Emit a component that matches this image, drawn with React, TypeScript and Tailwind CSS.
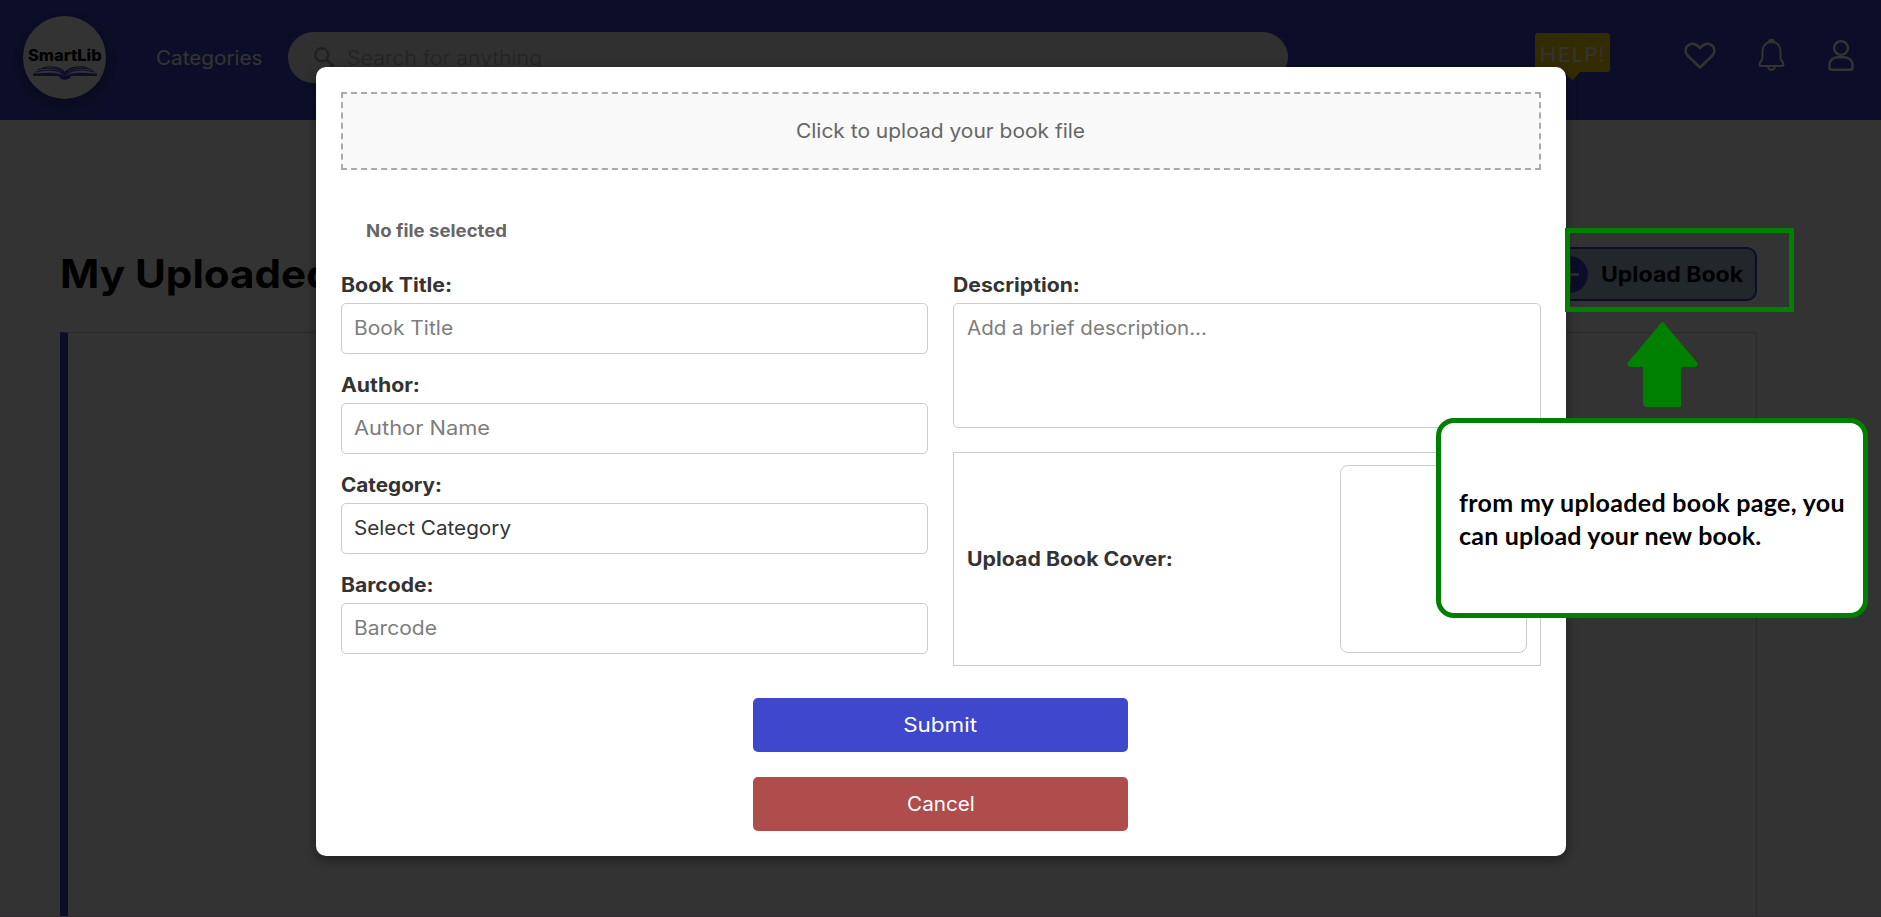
import type { ReactNode } from 'react';

function Logo() {
  return (
    <div className="flex h-[83px] w-[83px] shrink-0 flex-col items-center rounded-full bg-white pt-[31px] shadow-[0_4px_16px_4px_rgba(0,0,0,0.3)]">
      <span className="scale-x-[1.06] whitespace-nowrap text-[15.5px] leading-[18px] font-extrabold text-black">SmartLib</span>
      <svg className="mt-[1px]" width="64" height="15" viewBox="0 0 64 15" fill="none" stroke="#3f48cc" strokeLinecap="round">
        <path d="M0 7.5 L3 7.5 C12 6.5 23 6 29 8.5 Q32 10.5 35 8.5 C41 6 52 6.5 61 7.5 L64 7.5 L64 10 L38 10 C37 15 27 15 26 10 L0 10 Z" fill="#3f48cc" stroke="none" />
        <path d="M3 6 C13 3 25 3 32 9 C39 3 51 3 61 6 M5 3.5 C15 1 27 2 32 8 C37 2 49 1 59 3.5 M10 1.5 C20 -0.5 29 2 32 7 C35 2 44 -0.5 54 1.5" strokeWidth="1.1" />
      </svg>
    </div>
  );
}

function HelpSign() {
  return (
    <div className="flex w-[75px] flex-col">
      <div className="flex h-[39px] items-center justify-center rounded-[3px] bg-[#f8da00] pt-[2px] font-['Lato'] text-[22px] font-normal tracking-[1.2px] text-white">HELP!</div>
      <svg className="ml-[29px]" width="18" height="9" viewBox="0 0 18 9" fill="#f8da00">
        <path d="M0 0 H16 L10 7 Q8.500 9 7 7 Z" />
      </svg>
    </div>
  );
}

function Header() {
  return (
    <header className="flex h-[120px] items-start bg-[#3f48cc] pt-4 pl-[23px]">
      <Logo />
      <a className="mt-[27px] ml-[50px] w-[107px] whitespace-nowrap text-[19.5px] leading-[30px] text-white">
        <span className="inline-block origin-left scale-x-[1.06]">Categories</span>
      </a>
      <div className="mt-4 ml-[25px] flex h-[51px] w-[1000px] shrink-0 items-center rounded-full bg-[#eff1ef] pl-[26px]">
        <svg width="21" height="21" viewBox="0 0 21 21" fill="none" stroke="#aaa6a6" strokeWidth="2.500">
          <circle cx="7.800" cy="7.800" r="6.500" />
          <path d="M12.500 12.500 L19.500 19.500" strokeWidth="3" />
        </svg>
        <span className="ml-[12px] origin-left scale-x-[1.1] pt-px text-[19.5px] leading-[30px] font-light text-[#b2aeae]">Search for anything</span>
      </div>
      <div className="mt-[17px] ml-[247px]">
        <HelpSign />
      </div>
      <svg className="mt-[26px] ml-[74px] shrink-0" width="32" height="28" viewBox="0 0 32 28" fill="none" stroke="white" strokeWidth="2.500" strokeLinejoin="round">
        <path d="M16 25.500 L4 14 C0 9.800 1.300 4 5.500 2.300 C10 0.600 13.500 3 16 6 C18.500 3 22 0.600 26.500 2.300 C30.700 4 32 9.800 28 14 Z" />
      </svg>
      <svg className="mt-[22px] ml-[42px] shrink-0" width="27" height="34" viewBox="0 0 27 34" fill="none" stroke="white" strokeWidth="2" strokeLinejoin="round">
        <path d="M13.500 4 C7.500 4 4.500 8.500 4.500 13 V20 C4.500 23 1.500 23.500 1.500 26.500 Q1.500 28 3.500 28 H23.500 Q25.500 28 25.500 26.500 C25.500 23.500 22.500 23 22.500 20 V13 C22.500 8.500 19.500 4 13.500 4 Z" />
        <path d="M11.300 4 C11.300 1 15.700 1 15.700 4 M10 28.500 C10.500 33 16.500 33 17 28.500" />
      </svg>
      <svg className="mt-[23px] ml-[42px] shrink-0" width="28" height="33" viewBox="0 0 28 33" fill="none" stroke="white" strokeWidth="2.400" strokeLinejoin="round">
        <circle cx="14" cy="9" r="6.900" />
        <path d="M11 18.200 H17 C22.500 18.200 25.500 22 25.500 26 V28.500 Q25.500 30.800 23.500 30.800 H4.500 Q2.500 30.800 2.500 28.500 V26 C2.500 22 5.500 18.200 11 18.200 Z" />
      </svg>
    </header>
  );
}

function Page() {
  return (
    <div className="flex h-[917px] flex-col bg-white">
      <Header />
      <main className="flex flex-1 flex-col pt-[127px] pr-[124px] pl-[60px]">
        <div className="flex h-[54px] items-center justify-between">
          <h1 className="origin-left scale-x-[1.08] text-[39px] font-bold whitespace-nowrap text-black">My Uploaded</h1>
          <button className="flex h-[54px] w-[218px] items-center rounded-[10px] border-2 border-[#3f48cc] bg-[#acc2d8] pl-[10px]">
            <svg width="37" height="37" viewBox="0 0 37 37">
              <circle cx="18.500" cy="18.500" r="18.500" fill="#3f48cc" />
              <path d="M9 18.500 H28 M18.500 9 V28" stroke="#f0f0f0" strokeWidth="2.500" />
            </svg>
            <span className="ml-[13px] origin-left scale-x-[1.096] pt-[2px] text-[21px] font-bold whitespace-nowrap text-black">Upload Book</span>
          </button>
        </div>
        <section className="mt-[31px] flex-1 border-t border-r border-l-8 border-[#ccc] border-l-[#3f48cc]" />
      </main>
      <div className="h-px bg-[#f5dcea]" />
    </div>
  );
}

function Field({ label, children }: { label: ReactNode; children: ReactNode }) {
  return (
    <div className="flex flex-col">
      <div className="flex h-[32px] text-[19.5px] leading-[28px] font-bold text-[#333]">{label}</div>
      {children}
    </div>
  );
}

const box = 'flex h-[51px] items-center rounded-[5px] border border-[#ccc] pl-[12px] text-[19.5px] text-[#7d7d7d]';

function UploadModal() {
  return (
    <div className="flex h-[789px] w-[1250px] flex-col rounded-[10px] bg-white px-[25px] pt-[25px] shadow-[0_4px_12px_rgba(0,0,0,0.4)]">
      <div className="flex h-[78px] shrink-0 items-center justify-center border-2 border-dashed border-[#aaa] bg-[#f9f9f9] pt-[2px] text-[19.5px] text-[#666]">
        <span className="scale-x-[1.075]">Click to upload your book file</span>
      </div>
      <div className="mt-[47px] flex h-[28px] pl-[25px] text-[17.5px] leading-[28px] font-bold text-[#666]">
        <span className="origin-left scale-x-[1.062]">No file selected</span>
      </div>
      <div className="mt-[26px] grid grid-cols-2 gap-x-[25px]">
        <div className="flex flex-col gap-[17px]">
          <Field label={<span className="origin-left scale-x-[1.093]">Book Title:</span>}>
            <div className={box}><span className="origin-left scale-x-[1.076]">Book Title</span></div>
          </Field>
          <Field label={<span className="origin-left scale-x-[1.09]">Author:</span>}>
            <div className={box}><span className="origin-left scale-x-[1.12]">Author Name</span></div>
          </Field>
          <Field label={<span className="origin-left scale-x-[1.062]">Category:</span>}>
            <div className={box}><span className="origin-left scale-x-[1.061] text-[#333]">Select Category</span></div>
          </Field>
          <Field label={<span className="origin-left scale-x-[1.082]">Barcode:</span>}>
            <div className={box}><span className="origin-left scale-x-[1.079]">Barcode</span></div>
          </Field>
        </div>
        <div className="flex flex-col">
          <Field label={<span className="origin-left scale-x-[1.087]">Description:</span>}>
            <div className="flex h-[125px] rounded-[5px] border border-[#ccc] pt-[10px] pl-[13px] text-[19.5px] leading-[29px] text-[#7d7d7d]">
              <span className="origin-left scale-x-[1.053]">Add a brief description...</span>
            </div>
          </Field>
          <div className="mt-[24px] flex h-[214px] items-center justify-between border border-[#ccc] pr-[13px] pl-[13px]">
            <span className="origin-left scale-x-[1.093] pt-[2px] text-[19.5px] font-bold text-[#333]">Upload Book Cover:</span>
            <div className="h-[188px] w-[187px] rounded-lg border border-[#ccc]" />
          </div>
        </div>
      </div>
      <div className="mt-[32px] flex flex-col items-center gap-[25px]">
        <button className="flex h-[54px] w-[375px] items-center justify-center rounded-[5px] bg-[#3f48cc] pt-[2px] text-[19.5px] text-white">
          <span className="scale-x-[1.15]">Submit</span>
        </button>
        <button className="flex h-[54px] w-[375px] items-center justify-center rounded-[5px] bg-[#af4c4c] pt-[2px] text-[19.5px] text-white">
          <span className="scale-x-[1.06]">Cancel</span>
        </button>
      </div>
    </div>
  );
}

function Annotations() {
  return (
    <>
      <div className="absolute top-[228px] left-[1565px] h-[84px] w-[229px] border-[5px] border-[#008000]" />
      <svg className="absolute top-[321px] left-[1626px]" width="73" height="87" viewBox="0 0 73 87" fill="#008000" stroke="#008000" strokeWidth="2" strokeLinejoin="round">
        <path d="M36.500 2 L71 43 L69.500 45 H54 V85 H20 L18 83 V45 H3.500 L2 43 Z" />
      </svg>
      <div className="absolute top-[418px] left-[1436px] flex h-[200px] w-[432px] flex-col justify-center rounded-[18px] border-[5px] border-[#008000] bg-white pt-[2px] pl-[18px] font-['Lato'] text-[25px] leading-[33px] font-bold whitespace-nowrap text-black">
        <span className="tracking-[0.32px]">from my uploaded book page, you</span>
        <span className="tracking-[0.2px]">can upload your new book.</span>
      </div>
    </>
  );
}

export default function App() {
  return (
    <div className="relative h-[917px] w-[1881px] overflow-hidden font-['Inter',sans-serif]">
      <Page />
      <div className="absolute inset-0 flex justify-center bg-black/80 pt-[67px]">
        <UploadModal />
      </div>
      <Annotations />
    </div>
  );
}
